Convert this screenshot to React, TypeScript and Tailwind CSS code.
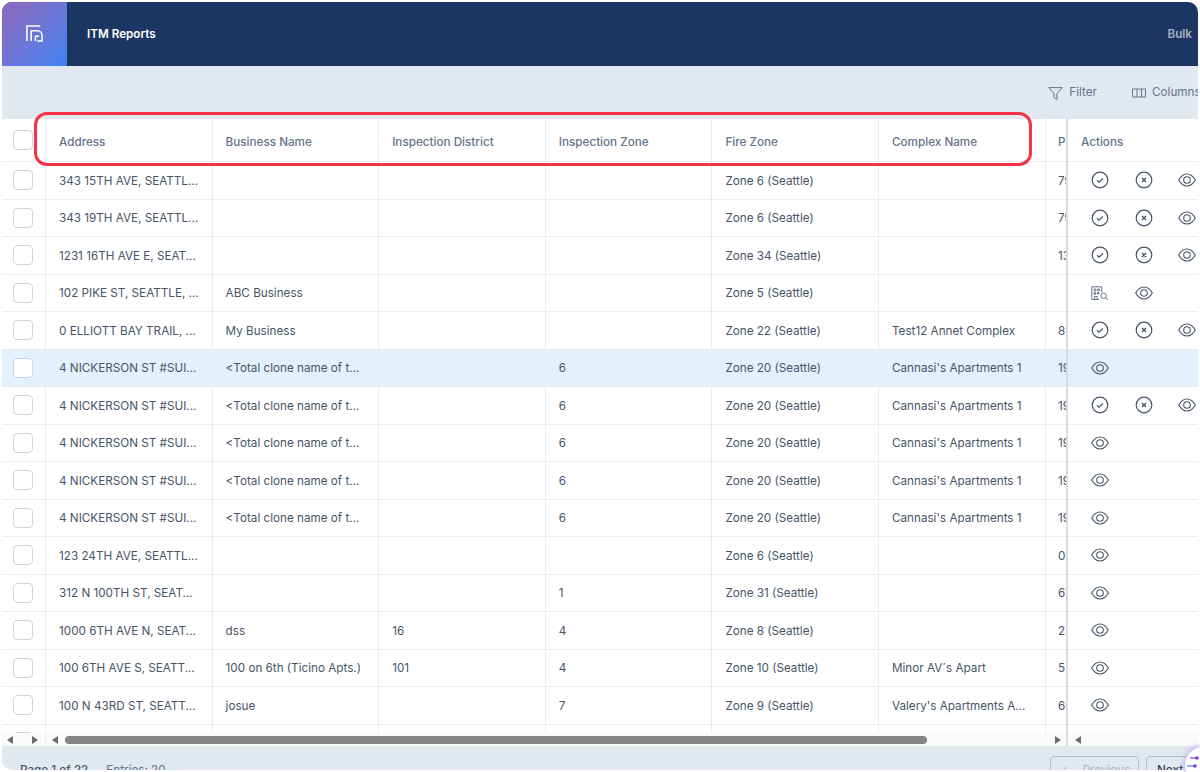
import { ArrowLeft, ChevronDown } from 'lucide-react';

const font = 'font-["Inter",sans-serif]';

type Row = {
  address: string;
  business?: string;
  district?: string;
  zone?: string;
  fire: string;
  complex?: string;
  parcel?: string;
  actions: 'full' | 'search' | 'view';
  selected?: boolean;
};

const rows: Row[] = [
  { address: '343 15TH AVE, SEATTL...', fire: 'Zone 6 (Seattle)', parcel: '79', actions: 'full' },
  { address: '343 19TH AVE, SEATTL...', fire: 'Zone 6 (Seattle)', parcel: '79', actions: 'full' },
  { address: '1231 16TH AVE E, SEAT...', fire: 'Zone 34 (Seattle)', parcel: '13', actions: 'full' },
  { address: '102 PIKE ST, SEATTLE, ...', business: 'ABC Business', fire: 'Zone 5 (Seattle)', actions: 'search' },
  { address: '0 ELLIOTT BAY TRAIL, ...', business: 'My Business', fire: 'Zone 22 (Seattle)', complex: 'Test12 Annet Complex', parcel: '89', actions: 'full' },
  { address: '4 NICKERSON ST #SUI...', business: '<Total clone name of t...', zone: '6', fire: 'Zone 20 (Seattle)', complex: "Cannasi's Apartments 1", parcel: '19', actions: 'view', selected: true },
  { address: '4 NICKERSON ST #SUI...', business: '<Total clone name of t...', zone: '6', fire: 'Zone 20 (Seattle)', complex: "Cannasi's Apartments 1", parcel: '19', actions: 'full' },
  { address: '4 NICKERSON ST #SUI...', business: '<Total clone name of t...', zone: '6', fire: 'Zone 20 (Seattle)', complex: "Cannasi's Apartments 1", parcel: '19', actions: 'view' },
  { address: '4 NICKERSON ST #SUI...', business: '<Total clone name of t...', zone: '6', fire: 'Zone 20 (Seattle)', complex: "Cannasi's Apartments 1", parcel: '19', actions: 'view' },
  { address: '4 NICKERSON ST #SUI...', business: '<Total clone name of t...', zone: '6', fire: 'Zone 20 (Seattle)', complex: "Cannasi's Apartments 1", parcel: '19', actions: 'view' },
  { address: '123 24TH AVE, SEATTL...', fire: 'Zone 6 (Seattle)', parcel: '00', actions: 'view' },
  { address: '312 N 100TH ST, SEAT...', zone: '1', fire: 'Zone 31 (Seattle)', parcel: '67', actions: 'view' },
  { address: '1000 6TH AVE N, SEAT...', business: 'dss', district: '16', zone: '4', fire: 'Zone 8 (Seattle)', parcel: '22', actions: 'view' },
  { address: '100 6TH AVE S, SEATT...', business: '100 on 6th (Ticino Apts.)', district: '101', zone: '4', fire: 'Zone 10 (Seattle)', complex: 'Minor AV´s Apart', parcel: '52', actions: 'view' },
  { address: '100 N 43RD ST, SEATT...', business: 'josue', zone: '7', fire: 'Zone 9 (Seattle)', complex: "Valery's Apartments A...", parcel: '60', actions: 'view' },
];

function Logo() {
  return (
    <svg width="17" height="17" viewBox="0 0 18 18" fill="none" stroke="white" strokeWidth="1.6" className="mb-[2px]">
      <path d="M1 17V1h14" />
      <path d="M5.5 17V6H12a5 5 0 0 1 5 5v6h-5" />
      <path d="M10 17v-5h4" />
    </svg>
  );
}

function EyeIcon() {
  return (
    <svg width="18" height="14" viewBox="0 0 18 14" fill="none" stroke="#475569" strokeWidth="1.1">
      <path d="M0.7 7C3 3 5.8 1 9 1s6 2 8.3 6C15 11 12.2 13 9 13S3 11 .7 7z" />
      <circle cx="9" cy="7" r="3.3" />
    </svg>
  );
}

function CheckIcon() {
  return (
    <svg width="18" height="18" viewBox="0 0 18 18" fill="none" stroke="#475569" strokeWidth="1.2">
      <circle cx="9" cy="9" r="7.8" />
      <path d="M6 9.3l2 1.8 4-3.6" />
    </svg>
  );
}

function CrossIcon() {
  return (
    <svg width="18" height="18" viewBox="0 0 18 18" fill="none" stroke="#475569" strokeWidth="1.2">
      <circle cx="9" cy="9" r="7.8" />
      <path d="M7 7l4 4M11 7l-4 4" strokeWidth="1.4" />
    </svg>
  );
}

function BuildingSearch() {
  return (
    <svg width="18" height="14" viewBox="0 0 18 14" fill="none" stroke="#64748b" strokeWidth="1">
      <path d="M8 13.5H.8V.8h10v5.4" />
      <path d="M3 3h1.8v1.8H3zM6.6 3h1.8v1.8H6.6zM3 6.6h1.8v1.8H3zM6.6 6.6h1.4v1.4H6.6zM3.6 13.5v-3h2.6v3" />
      <circle cx="12.6" cy="9.8" r="2.7" />
      <path d="M14.6 11.8l2.6 1.9" />
    </svg>
  );
}

function FunnelIcon() {
  return (
    <svg width="15" height="13" viewBox="0 0 15 13" fill="none" stroke="#64748b" strokeWidth="1">
      <path d="M.8.6h13.4L9 6.4v6L6 10.6V6.4z" />
    </svg>
  );
}

function ColumnsIcon() {
  return (
    <svg width="14" height="10" viewBox="0 0 14 10" fill="none" stroke="#64748b" strokeWidth="1">
      <path d="M.5 1h13v8H.5zM5 1v8M9.5 1v8" />
    </svg>
  );
}

function Triangle({ left }: { left?: boolean }) {
  return (
    <svg width="6" height="8" viewBox="0 0 6 8" fill="#6b6b6b">
      <path d={left ? 'M6 0v8L0 4z' : 'M0 0v8l6-4z'} />
    </svg>
  );
}

function Box() {
  return <div className="h-5 w-5 shrink-0 rounded-[4px] border border-[#cbd5e1] bg-white" />;
}

function Cell({ children }: { children?: React.ReactNode }) {
  return (
    <div className="flex h-full w-[166.6px] shrink-0 items-center border-r border-[#e8edf3] pt-[3px] pl-[13px] text-[11.7px] whitespace-nowrap text-[#475569]">
      {children}
    </div>
  );
}

function HeadCell({ children }: { children?: React.ReactNode }) {
  return (
    <div className="flex h-full w-[166.6px] shrink-0 items-center border-r border-[#e8edf3] pt-[5px] pl-[13px] text-[11.7px] font-medium whitespace-nowrap text-[#64748b]">
      {children}
    </div>
  );
}

function Actions({ kind }: { kind: Row['actions'] }) {
  return (
    <div className="flex items-center gap-[25.5px] pl-[23px]">
      {kind === 'full' && (
        <>
          <CheckIcon />
          <CrossIcon />
        </>
      )}
      {kind === 'search' && <BuildingSearch />}
      <EyeIcon />
    </div>
  );
}

export default function App() {
  return (
    <div className={`relative h-[772px] w-[1200px] overflow-hidden bg-white p-[2px] ${font}`}>
      <div className="flex h-[768px] flex-col overflow-hidden rounded-[10px] bg-[#e2e8f0]">
        {/* Header */}
        <div className="flex h-[64px] shrink-0 items-center bg-[#1c3664]">
          <div className="flex h-full w-[65px] items-center justify-center bg-gradient-to-br from-[#8a68b8] to-[#3b82f6]">
            <Logo />
          </div>
          <span className="mt-[1px] ml-5 text-[11.7px] font-semibold text-white">ITM Reports</span>
          <span className="mt-[1px] mr-[6px] ml-auto text-[11.7px] font-semibold text-[#a5b1c6]">Bulk</span>
        </div>

        {/* Toolbar */}
        <div className="flex h-[53px] shrink-0 items-center justify-end pt-[1px] text-[11.7px] text-[#64748b]">
          <FunnelIcon />
          <span className="ml-[6px]">Filter</span>
          <span className="ml-[35px]">
            <ColumnsIcon />
          </span>
          <span className="ml-[6px] w-[46px] overflow-hidden whitespace-nowrap">Columns</span>
        </div>

        {/* Table */}
        <div className="flex h-[627px] shrink-0 overflow-hidden bg-white">
          <div className="w-[1064px] shrink-0 overflow-hidden">
            <div className="flex h-[43px] items-center border-b border-[#e8edf3]">
              <div className="flex h-full w-[44px] shrink-0 items-center justify-center border-r border-[#e8edf3] pr-[1px]">
                <Box />
              </div>
              <HeadCell>Address</HeadCell>
              <HeadCell>Business Name</HeadCell>
              <HeadCell>Inspection District</HeadCell>
              <HeadCell>Inspection Zone</HeadCell>
              <HeadCell>Fire Zone</HeadCell>
              <HeadCell>Complex Name</HeadCell>
              <div className="pt-[5px] pl-[12.5px] text-[11.7px] font-medium text-[#64748b]">Parcel</div>
            </div>
            {rows.map((row, i) => (
              <div key={i} className={`flex h-[37.5px] items-center border-b border-[#e8edf3] ${row.selected ? 'bg-[#e3f1fc]' : ''}`}>
                <div className="flex h-full w-[44px] shrink-0 items-center justify-center border-r border-[#e8edf3] pr-[1px]">
                  <Box />
                </div>
                <Cell>{row.address}</Cell>
                <Cell>{row.business}</Cell>
                <Cell>{row.district}</Cell>
                <Cell>{row.zone}</Cell>
                <Cell>{row.fire}</Cell>
                <Cell>{row.complex}</Cell>
                <div className="pt-[3px] pl-[12.5px] text-[11.7px] text-[#475569]">{row.parcel}</div>
              </div>
            ))}
            <div className="flex h-[8px] items-start">
              <div className="flex h-full w-[44px] shrink-0 justify-center overflow-hidden border-r border-[#e8edf3] pt-[7px] pr-[1px]">
                <Box />
              </div>
              <Cell />
              <Cell />
              <Cell />
              <Cell />
              <Cell />
              <Cell />
            </div>
            {/* Horizontal scrollbar */}
            <div className="flex h-[14px] items-center bg-[#fafafa]">
              <div className="flex w-[44px] shrink-0 items-center justify-between border-r border-[#f0f0f0] pr-[7px] pl-[5px]">
                <Triangle left />
                <Triangle />
              </div>
              <div className="flex flex-1 items-center pr-[5px] pl-[6px]">
                <Triangle left />
                <div className="ml-[7px] h-2 w-[862px] rounded-full bg-[#868686]" />
                <div className="flex-1" />
                <Triangle />
              </div>
            </div>
          </div>

          {/* Pinned actions column */}
          <div className="flex w-[132px] shrink-0 flex-col border-l-2 border-[#d9dbe0] bg-white">
            <div className="flex h-[43px] shrink-0 items-center border-b border-[#e8edf3] pt-[5px] pl-[13px] text-[11.7px] font-medium text-[#64748b]">
              Actions
            </div>
            {rows.map((row, i) => (
              <div key={i} className={`flex h-[37.5px] shrink-0 items-center border-b border-[#e8edf3] ${row.selected ? 'bg-[#e3f1fc]' : ''}`}>
                <Actions kind={row.actions} />
              </div>
            ))}
            <div className="h-[8px] shrink-0" />
            <div className="flex h-[14px] shrink-0 items-center bg-[#fafafa] pl-[7px]">
              <Triangle left />
            </div>
          </div>
        </div>

        {/* Footer */}
        <div className="flex h-[24px] shrink-0 items-start overflow-hidden pt-[10px] pl-[18px] text-[11.7px] text-[#475569]">
          <span className="mt-[6px] font-medium">Page 1 of 22</span>
          <span className="mt-[6px] ml-[18px] text-[#64748b]">Entries: 20</span>
          <ChevronDown className="mt-[8px] ml-[4px] h-4 w-4 shrink-0 text-[#64748b]" strokeWidth={1.2} />
          <div className="ml-auto flex h-[30px] w-[89px] shrink-0 items-center justify-center gap-2 rounded-[4px] border border-[#b5c0cf] text-[#a9b5c5]">
            <ArrowLeft className="h-4 w-4" strokeWidth={1.2} />
            Previous
          </div>
          <div className="mr-[-8px] ml-[7px] flex h-[30px] w-[60px] shrink-0 items-center rounded-[4px] border border-[#b5c0cf] pl-[10px] font-medium text-[#334155]">
            Next
          </div>
        </div>
      </div>

      {/* Callout around the table header */}
      <div className="absolute top-[112px] left-[34px] h-[54px] w-[998px] rounded-[13px] border-[3px] border-[#f43346]" />

      {/* Chat widget */}
      <div className="absolute top-[747px] left-[1185px] h-[36px] w-[36px] rounded-full bg-white shadow-[0_0_6px_#a78bfa]">
        <svg width="14" height="20" viewBox="0 0 14 20" className="mt-[8px] ml-[1px]" fill="none" strokeWidth="1.2">
          <path d="M4 3h6" stroke="#7c3aed" />
          <circle cx="11" cy="3" r="1.8" fill="#7c3aed" />
          <path d="M1 11h7" stroke="#3b82f6" />
          <circle cx="9" cy="11" r="1.8" fill="#7c3aed" />
        </svg>
      </div>
    </div>
  );
}
